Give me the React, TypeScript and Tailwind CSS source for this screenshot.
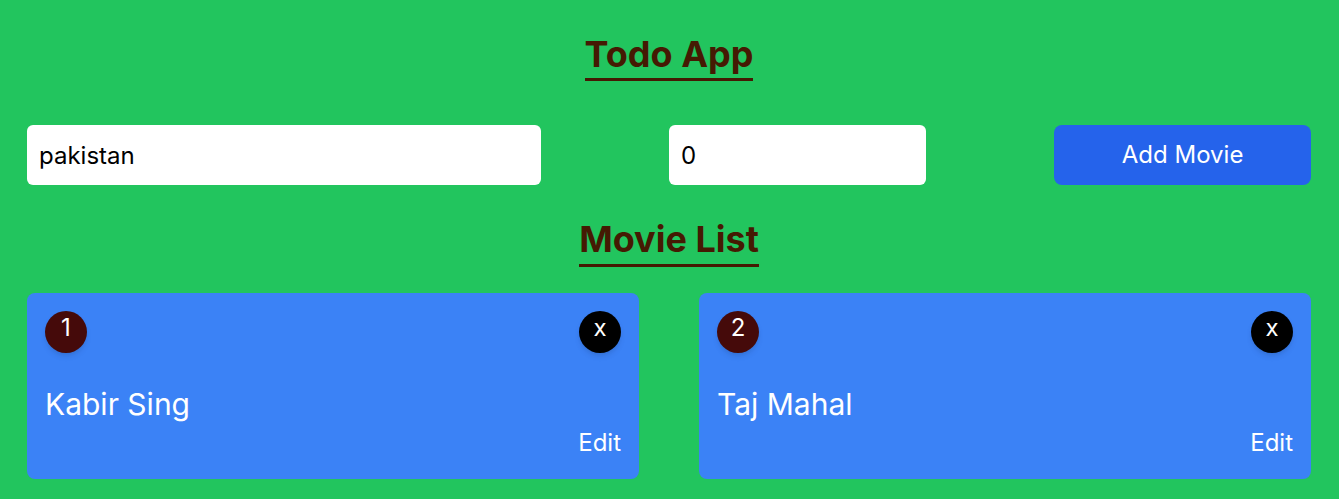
import React from "react";

const movies = [
  { id: 1, name: "Kabir Sing" },
  { id: 2, name: "Taj Mahal" },
];

export default function App() {
  return (
    <div
      className="min-h-[499px] bg-[#22c55e] pl-[27px] pr-[28px] pt-[34px] pb-[21px]"
      style={{ fontFamily: "Inter, 'Noto Sans', sans-serif" }}
    >
      <div className="flex justify-center">
        <h1 className="border-b-[3px] border-[#451a03] pb-1 text-4xl font-bold text-[#451a03]">
          Todo App
        </h1>
      </div>

      <div className="mt-[44px] flex justify-between">
        <input
          className="h-[60px] w-2/5 rounded-md bg-white px-3 text-2xl text-black outline-none"
          defaultValue="pakistan"
        />
        <input
          className="h-[60px] w-1/5 rounded-md bg-white px-3 text-2xl text-black outline-none"
          defaultValue="0"
        />
        <button className="h-[60px] w-1/5 rounded-lg bg-[#2563eb] text-2xl text-white">
          Add Movie
        </button>
      </div>

      <div className="mt-[34px] flex justify-center">
        <h2 className="border-b-[3px] border-[#451a03] pb-[5px] text-4xl font-bold text-[#451a03]">
          Movie List
        </h2>
      </div>

      <div className="mt-[26px] grid grid-cols-2 gap-[60px]">
        {movies.map((m) => (
          <div key={m.id} className="flex h-[186px] flex-col rounded-lg bg-[#3b82f6] p-[18px]">
            <div className="flex justify-between">
              <div className="flex h-[42px] w-[42px] justify-center rounded-full bg-[#450a0a] pt-px text-2xl text-white shadow-md">
                {m.id}
              </div>
              <button className="flex h-[42px] w-[42px] justify-center rounded-full bg-black pt-px text-2xl text-white shadow-md">
                x
              </button>
            </div>
            <div className="mt-[33px] text-3xl text-white">{m.name}</div>
            <div className="mt-[5px] text-right text-2xl text-white">Edit</div>
          </div>
        ))}
      </div>
    </div>
  );
}
